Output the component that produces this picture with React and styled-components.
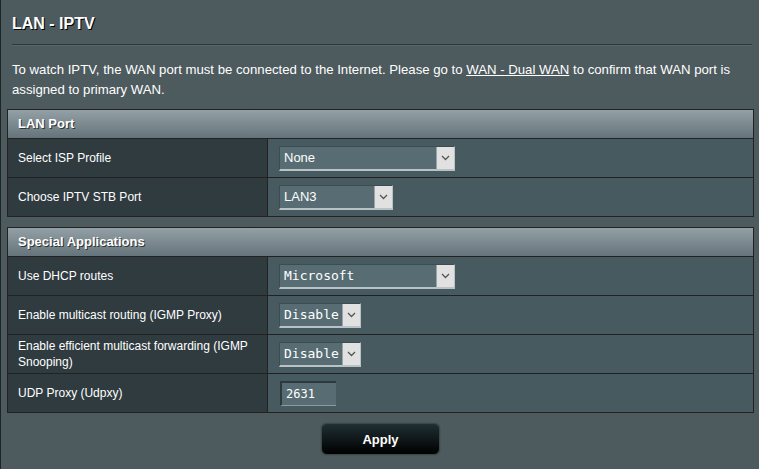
import React from 'react'
import styled, { createGlobalStyle } from 'styled-components'

const GlobalStyle = createGlobalStyle`
    html, body {
        margin: 0;
        padding: 0;
        background: #4d5a5e;
    }
    body {
        font-family: "Liberation Sans", Arial, sans-serif;
        color: #fff;
    }
`;

const lanRows = [
    { label: 'Select ISP Profile', kind: 'select', value: 'None', width: 176 },
    { label: 'Choose IPTV STB Port', kind: 'select', value: 'LAN3', width: 114 },
]

const specialRows = [
    { label: 'Use DHCP routes', kind: 'select', value: 'Microsoft', width: 176, mono: true },
    { label: 'Enable multicast routing (IGMP Proxy)', kind: 'select', value: 'Disable', width: 82, mono: true },
    { label: 'Enable efficient multicast forwarding (IGMP Snooping)', kind: 'select', value: 'Disable', width: 82, mono: true },
    { label: 'UDP Proxy (Udpxy)', kind: 'input', value: '2631', width: 56 },
]

const Chevron = () => (
    <svg width="9" height="6" viewBox="0 0 9 6">
        <path d="M1 1 L4.5 4.5 L8 1" fill="none" stroke="#555" strokeWidth="1.3" />
    </svg>
)

const Field = ({ row }) => {
    if (row.kind === 'input') {
        return <TextInput $width={row.width}>{row.value}</TextInput>
    }
    return (
        <SelectBox $width={row.width}>
            <SelectValue $mono={row.mono}>{row.value}</SelectValue>
            <ArrowBox><Chevron /></ArrowBox>
        </SelectBox>
    )
}

const Section = ({ title, rows }) => (
    <Table>
        <HeaderRow>{title}</HeaderRow>
        {rows.map((row) => (
            <Row key={row.label}>
                <LabelCell>{row.label}</LabelCell>
                <ValueCell><Field row={row} /></ValueCell>
            </Row>
        ))}
    </Table>
)

const App = () => {
    return (
        <Page>
            <GlobalStyle />
            <Title>LAN - IPTV</Title>
            <Divider />
            <Intro>
                To watch IPTV, the WAN port must be connected to the Internet. Please go to <Link>WAN - Dual WAN</Link> to confirm that WAN port is assigned to primary WAN.
            </Intro>
            <Section title="LAN Port" rows={lanRows} />
            <Section title="Special Applications" rows={specialRows} />
            <ButtonBar>
                <ApplyButton>Apply</ApplyButton>
            </ButtonBar>
        </Page>
    )
}

const Page = styled.div`
    min-height: 469px;
    box-sizing: border-box;
    border-left: 1px solid #1d2427;
    padding: 14px 5px 12px 6px;
`;

const Title = styled.div`
    font-size: 16px;
    font-weight: bold;
    line-height: 19px;
    margin-left: 5px;
    text-shadow: 1px 1px 0 #000;
`;

const Divider = styled.div`
    height: 1px;
    margin: 11px 2px 0 5px;
    background: #2c383c;
    border-bottom: 1px solid #56666b;
`;

const Intro = styled.p`
    margin: 14px 2px 9px 5px;
    font-size: 13.2px;
    line-height: 20px;
    color: #fff;
`;

const Link = styled.span`
    text-decoration: underline;
`;

const Table = styled.div`
    border: 1px solid #222;
    margin-bottom: 10px;
`;

const HeaderRow = styled.div`
    height: 28px;
    line-height: 28px;
    padding-left: 10px;
    font-size: 13px;
    font-weight: bold;
    background: linear-gradient(to bottom, #93a1a6, #65747a);
    text-shadow: 1px 1px 0 #333;
    border-bottom: 1px solid #222;
`;

const Row = styled.div`
    display: grid;
    grid-template-columns: 260px 1fr;
    height: 38px;
    border-bottom: 1px solid #222;

    &:last-child {
        border-bottom: none;
    }
`;

const LabelCell = styled.div`
    display: flex;
    align-items: center;
    background: #2f3b3f;
    border-right: 1px solid #222;
    padding: 0 8px 0 10px;
    font-size: 12px;
    line-height: 16px;
    color: #fff;
`;

const ValueCell = styled.div`
    display: flex;
    align-items: center;
    background: #475a5f;
    padding-left: 11px;
`;

const SelectBox = styled.div`
    display: flex;
    width: ${p => p.$width}px;
    height: 25px;
    box-sizing: border-box;
    background: #576d73;
    border-top: 1px solid #3d4c50;
    border-left: 1px solid #3d4c50;
    border-bottom: 2px solid #b9c2c4;
    border-right: 1px solid #b9c2c4;
`;

const SelectValue = styled.div`
    flex: 1;
    display: flex;
    align-items: center;
    padding-left: 4px;
    font-family: ${p => p.$mono ? '"DejaVu Sans Mono", monospace' : '"Liberation Sans", Arial, sans-serif'};
    font-size: 13px;
    color: #fff;
    overflow: hidden;
`;

const ArrowBox = styled.div`
    width: 17px;
    display: flex;
    align-items: center;
    justify-content: center;
    background: #e1e1e1;
    border-left: 1px solid #9aa3a5;
`;

const TextInput = styled.div`
    width: ${p => p.$width}px;
    height: 25px;
    box-sizing: border-box;
    display: flex;
    align-items: center;
    padding-left: 4px;
    margin-left: 1px;
    background: #576d73;
    border-top: 2px solid #2c3a3e;
    border-left: 2px solid #2c3a3e;
    border-bottom: 1px solid #8c9a9e;
    font-family: "DejaVu Sans Mono", monospace;
    font-size: 12px;
    color: #fff;
`;

const ButtonBar = styled.div`
    display: flex;
    justify-content: center;
`;

const ApplyButton = styled.button`
    width: 119px;
    height: 32px;
    border-radius: 6px;
    border: 1px solid #3a474b;
    background: linear-gradient(to bottom, #1f2f34, #000);
    color: #fff;
    font-family: "Liberation Sans", Arial, sans-serif;
    font-size: 13px;
    font-weight: bold;
    cursor: pointer;
    box-shadow: 0 0 1px #222;
`;

export default App
